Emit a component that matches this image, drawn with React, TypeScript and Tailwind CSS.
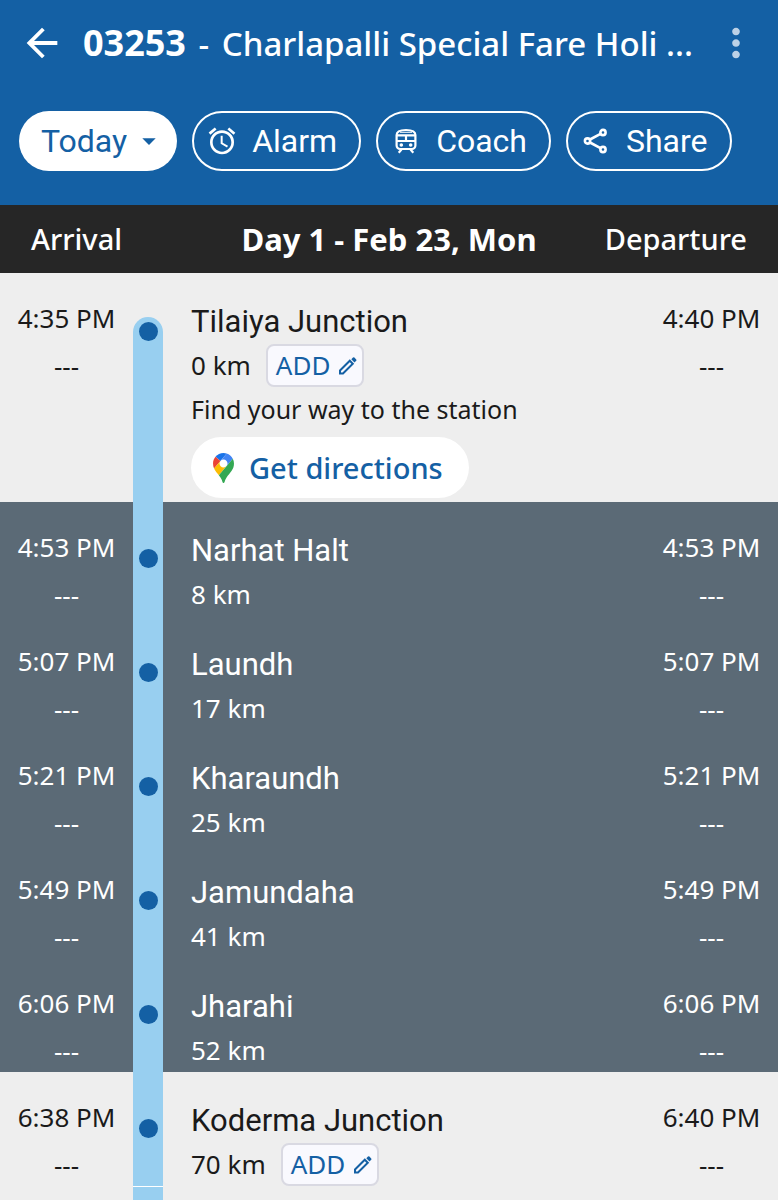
import type { ReactNode } from 'react'
import { MdAlarm, MdArrowBack, MdArrowDropDown, MdMoreVert } from 'react-icons/md'

type Stop = {
  name: string
  km: number
  arrival: string
  departure: string
  halt: boolean
  origin?: boolean
}

const STOPS: Stop[] = [
  { name: 'Tilaiya Junction', km: 0, arrival: '4:35 PM', departure: '4:40 PM', halt: true, origin: true },
  { name: 'Narhat Halt', km: 8, arrival: '4:53 PM', departure: '4:53 PM', halt: false },
  { name: 'Laundh', km: 17, arrival: '5:07 PM', departure: '5:07 PM', halt: false },
  { name: 'Kharaundh', km: 25, arrival: '5:21 PM', departure: '5:21 PM', halt: false },
  { name: 'Jamundaha', km: 41, arrival: '5:49 PM', departure: '5:49 PM', halt: false },
  { name: 'Jharahi', km: 52, arrival: '6:06 PM', departure: '6:06 PM', halt: false },
  { name: 'Koderma Junction', km: 70, arrival: '6:38 PM', departure: '6:40 PM', halt: true },
]

function TrainIcon() {
  return (
    <svg viewBox="0 0 28 28" className="size-7" fill="none" stroke="currentColor" strokeWidth="2.2">
      <path d="M4.600 8c0-3.700 3-5 9.400-5s9.400 1.300 9.400 5v10.500a3.500 3.500 0 0 1-3.500 3.500H8.100a3.500 3.500 0 0 1-3.500-3.500z" />
      <path d="M4.600 8.300h18.800M4.600 14h18.800M14 8.300V14M9.500 22.500l-2.800 3.200M18.500 22.500l2.800 3.200" />
      <path d="M8 5.300h12" strokeWidth="1" />
      <circle cx="9.300" cy="18" r="1.800" fill="currentColor" stroke="none" />
      <circle cx="18.700" cy="18" r="1.800" fill="currentColor" stroke="none" />
    </svg>
  )
}

function ShareIcon() {
  return (
    <svg viewBox="0 0 28 28" className="size-7" fill="none" stroke="currentColor" strokeWidth="2.6">
      <circle cx="21" cy="5.500" r="2.600" />
      <circle cx="5.500" cy="14" r="2.600" />
      <circle cx="21" cy="22.500" r="2.600" />
      <path d="M8 12.500 18.500 6.800M8 15.500 18.500 21.200" />
    </svg>
  )
}

function PencilIcon() {
  return (
    <svg viewBox="0 0 20 20" className="size-5" fill="none" stroke="currentColor" strokeWidth="2">
      <path d="M2 17.500v-3L11.800 4.700l3 3L5 17.500z" />
      <path d="M13.300 3.300l1.700-1.700a1 1 0 0 1 1.400 0l1.800 1.800a1 1 0 0 1 0 1.400L16.500 6.500z" fill="currentColor" stroke="none" />
    </svg>
  )
}

function MapsPin() {
  return (
    <svg viewBox="0 0 92.3 132.3" className="h-[30px] w-[21px]">
      <path fill="#1a73e8" d="M60.2 2.2C55.8.8 51 0 46.1 0 32 0 19.3 6.4 10.8 16.5l21.8 18.3L60.2 2.2z" />
      <path fill="#ea4335" d="M10.8 16.5C4.1 24.5 0 34.9 0 46.1c0 8.7 1.7 15.7 4.6 22l28-33.3-21.8-18.3z" />
      <path fill="#4285f4" d="M46.2 28.5c9.8 0 17.7 7.9 17.7 17.7 0 4.3-1.6 8.3-4.2 11.4 0 0 13.9-16.6 27.5-32.7-5.6-10.8-15.3-19-27-22.7L32.6 34.8c3.3-3.8 8.1-6.3 13.6-6.3" />
      <path fill="#fbbc04" d="M46.2 63.8c-9.8 0-17.7-7.9-17.7-17.7 0-4.3 1.5-8.3 4.1-11.3l-28 33.3c4.8 10.6 12.8 19.2 21 29.9l34.1-40.5c-3.3 3.9-8.1 6.3-13.5 6.3" />
      <path fill="#34a853" d="M59.1 109.2c15.4-24.1 33.3-35 33.3-63 0-7.7-1.9-14.9-5.2-21.3L25.6 98c2.6 3.4 5.3 7.3 7.9 11.3 9.4 14.5 6.8 23.1 12.8 23.1s3.4-8.7 12.8-23.2" />
    </svg>
  )
}

function Chip({ icon, label }: { icon: ReactNode; label: string }) {
  return (
    <button className="flex h-[60px] items-center gap-4 rounded-full border-2 border-white pr-[22px] pl-3.5 font-['Roboto',sans-serif] text-[32px]">
      <span className="flex size-7 items-center justify-center">{icon}</span>
      {label}
    </button>
  )
}

function Times({ time }: { time: string }) {
  return (
    <div className="flex w-[133px] shrink-0 flex-col items-center gap-2 pt-[25px] leading-[40px]">
      <span>{time}</span>
      <span>---</span>
    </div>
  )
}

function StopRow({ stop }: { stop: Stop }) {
  return (
    <li className={stop.halt ? 'flex bg-[#eeeeee] text-[#1a1a1a]' : 'flex bg-[#5b6a76] text-white'}>
      <Times time={stop.arrival} />
      <div className={stop.origin ? 'flex w-[30px] shrink-0 pt-11' : 'flex w-[30px] shrink-0'}>
        <div
          className={
            stop.origin
              ? 'flex flex-1 justify-center rounded-t-full bg-[#98cff0] pt-[5px]'
              : 'flex flex-1 justify-center bg-[#98cff0] pt-[47px]'
          }
        >
          <span className="size-[19px] rounded-full bg-[#1460a4]" />
        </div>
      </div>
      <div className={stop.origin ? 'min-w-0 flex-1 pt-[27px] pb-1 pl-7' : 'h-[114px] min-w-0 flex-1 pt-[27px] pl-7'}>
        <h2 className="truncate font-['Roboto',sans-serif] text-[31px] leading-[44px]">{stop.name}</h2>
        <div className="flex h-[43px] items-center gap-[15px]">
          <span>{stop.km} km</span>
          {stop.halt && (
            <button className="flex h-[43px] items-center gap-2 rounded-lg border-2 border-[#d9d9e2] bg-[#f9f9fe] pr-1 pl-2 text-[#1460a4]">
              ADD
              <PencilIcon />
            </button>
          )}
        </div>
        {stop.origin && (
          <>
            <p className="text-[25px] leading-[44px]">Find your way to the station</p>
            <button className="mt-[6px] flex h-[61px] items-center gap-[15px] rounded-full bg-white pr-[26px] pl-[22px] text-[29px] font-medium text-[#1460a4]">
              <MapsPin />
              Get directions
            </button>
          </>
        )}
      </div>
      <Times time={stop.departure} />
    </li>
  )
}

export default function App() {
  return (
    <div className="flex min-h-screen flex-col bg-[#eeeeee] font-['Noto_Sans',sans-serif] text-[26px]">
      <header className="bg-[#1460a4] pb-[34px] text-white">
        <div className="flex h-[86px] items-center px-[19px]">
          <button aria-label="Back" className="shrink-0">
            <MdArrowBack className="size-[46px]" />
          </button>
          <h1 className="ml-[18px] min-w-0 flex-1 overflow-hidden text-[33px] leading-[48px] font-medium whitespace-nowrap">
            <b className="text-[36px] font-bold">03253</b>
            <span className="mx-1"> - </span>
            Charlapalli Special Fare Holi ...
          </h1>
          <button aria-label="More options" className="shrink-0 text-[#bcd1e6]">
            <MdMoreVert className="size-[46px]" />
          </button>
        </div>
        <div className="mt-[25px] flex gap-[15px] px-[19px]">
          <label className="relative">
            <select
              aria-label="Journey date"
              className="field-sizing-content h-[60px] appearance-none rounded-full bg-white pr-[50px] pl-[22px] font-['Roboto',sans-serif] text-[32px] text-[#1460a4]"
            >
              <option>Today</option>
            </select>
            <MdArrowDropDown className="pointer-events-none absolute top-[14px] right-3 size-8 text-[#1460a4]" />
          </label>
          <Chip icon={<MdAlarm className="size-8 shrink-0" />} label="Alarm" />
          <Chip icon={<TrainIcon />} label="Coach" />
          <Chip icon={<ShareIcon />} label="Share" />
        </div>
      </header>

      <div className="flex h-[68px] items-center justify-between bg-[#262626] px-[31px] text-[29px] font-medium text-white">
        <span className="flex-1">Arrival</span>
        <span className="text-[31px] font-bold">Day 1 - Feb 23, Mon</span>
        <span className="flex-1 text-right">Departure</span>
      </div>

      <ol>
        {STOPS.map((stop) => (
          <StopRow key={stop.name} stop={stop} />
        ))}
      </ol>
      {/* the track runs on below the last loaded stop */}
      <div className="ml-[133px] w-[30px] flex-1 border-t border-white bg-[#98cff0]" />
    </div>
  )
}
